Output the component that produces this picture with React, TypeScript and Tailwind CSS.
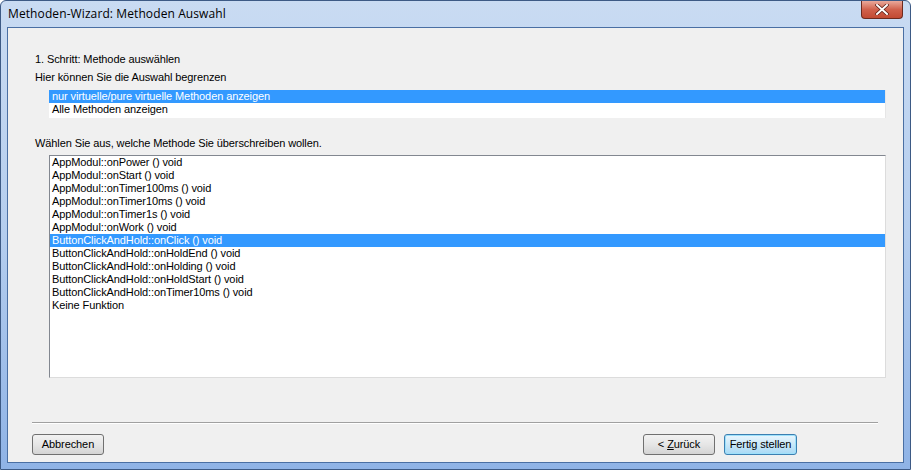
import React from "react";

const topItems = ["nur virtuelle/pure virtuelle Methoden anzeigen", "Alle Methoden anzeigen"];
const methods = [
  "AppModul::onPower () void",
  "AppModul::onStart () void",
  "AppModul::onTimer100ms () void",
  "AppModul::onTimer10ms () void",
  "AppModul::onTimer1s () void",
  "AppModul::onWork () void",
  "ButtonClickAndHold::onClick () void",
  "ButtonClickAndHold::onHoldEnd () void",
  "ButtonClickAndHold::onHolding () void",
  "ButtonClickAndHold::onHoldStart () void",
  "ButtonClickAndHold::onTimer10ms () void",
  "Keine Funktion",
];

const font = { fontFamily: '"Liberation Sans", Arial, sans-serif' };

export default function App() {
  return (
    <div
      className="w-[911px] h-[470px] flex flex-col rounded-t-[6px] border border-[#3d5a85] bg-gradient-to-b from-[#c9dbf2] via-[#b4cdee] to-[#8fb3e6] text-black"
      style={font}
    >
      <div className="h-[26px] flex items-start justify-between pl-[7px]">
        <div className="text-[12px] leading-[12px] mt-[7px] text-black tracking-[0.1px]" style={{ fontFamily: '"Open Sans", "Liberation Sans", sans-serif' }}>
          Methoden-Wizard: Methoden Auswahl
        </div>
        <div className="w-[42px] h-[18px] mr-[7px] rounded-b-[4px] border border-t-0 border-[#6d2a1e] bg-gradient-to-b from-[#e9a99b] via-[#d0614c] to-[#c24a33] flex items-center justify-center">
          <svg width="14" height="11" viewBox="0 0 14 11">
            <path d="M2 1 L12 10 M12 1 L2 10" stroke="#5a1b12" strokeWidth="3.4" strokeLinecap="square" />
            <path d="M2 1 L12 10 M12 1 L2 10" stroke="#ffffff" strokeWidth="2" strokeLinecap="square" />
          </svg>
        </div>
      </div>
      <div className="flex-1 mx-[6px] mb-[6px] border border-[#4a6fa3] bg-[#f0f0f0] flex flex-col pl-[27px] pr-[25px]">
        <div className="text-[11px] leading-[13px] mt-[25px] tracking-[-0.1px]">1. Schritt: Methode auswählen</div>
        <div className="text-[11px] leading-[13px] mt-[5px] tracking-[-0.1px]">Hier können Sie die Auswahl begrenzen</div>
        <div className="ml-[14px] mr-[-8px] mt-[6px] h-[28px] bg-white flex flex-col border-r border-[#e6e6e6]">
          {topItems.map((t, i) => (
            <div
              key={t}
              className={
                "h-[13px] text-[11px] leading-[13px] pl-[3px] tracking-[-0.1px] " +
                (i === 0 ? "bg-[#3399ff] text-white" : "text-black")
              }
            >
              {t}
            </div>
          ))}
        </div>
        <div className="text-[11px] leading-[13px] mt-[19px] tracking-[-0.1px]">Wählen Sie aus, welche Methode Sie überschreiben wollen.</div>
        <div className="ml-[14px] mr-[-8px] mt-[5px] h-[223px] bg-white border border-[#828790] border-b-[#dcdcdc] border-r-[#dcdcdc] flex flex-col">
          {methods.map((t, i) => (
            <div
              key={t}
              className={
                "h-[13px] text-[11px] leading-[13px] pl-[2px] tracking-[-0.1px] " +
                (i === 6 ? "bg-[#3399ff] text-white" : "text-black")
              }
            >
              {t}
            </div>
          ))}
        </div>
        <div className="mt-[44px] ml-[-3px] mr-[0px] h-[2px] border-t border-[#a0a0a0] border-b border-b-white" />
        <div className="mt-[10px] flex items-center ml-[-3px]">
          <button className="w-[72px] h-[21px] rounded-[3px] border border-[#707070] bg-gradient-to-b from-[#f2f2f2] via-[#e6e6e6] to-[#d4d4d4] text-[11px] leading-[13px] tracking-[-0.1px]">
            Abbrechen
          </button>
          <div className="flex-1" />
          <button className="w-[72px] h-[21px] rounded-[3px] border border-[#707070] bg-gradient-to-b from-[#f2f2f2] via-[#e6e6e6] to-[#d4d4d4] text-[11px] leading-[13px] tracking-[-0.1px]">
            &lt; <span className="underline">Z</span>urück
          </button>
          <button className="ml-[9px] mr-[81px] w-[73px] h-[21px] rounded-[3px] border border-[#3c7fb1] bg-gradient-to-b from-[#eaf6fd] via-[#c9e8f9] to-[#a8d9f5] text-[11px] leading-[13px] tracking-[-0.1px] shadow-[inset_0_0_0_1px_#9ee1fb]">
            Fertig stellen
          </button>
        </div>
      </div>
    </div>
  );
}
